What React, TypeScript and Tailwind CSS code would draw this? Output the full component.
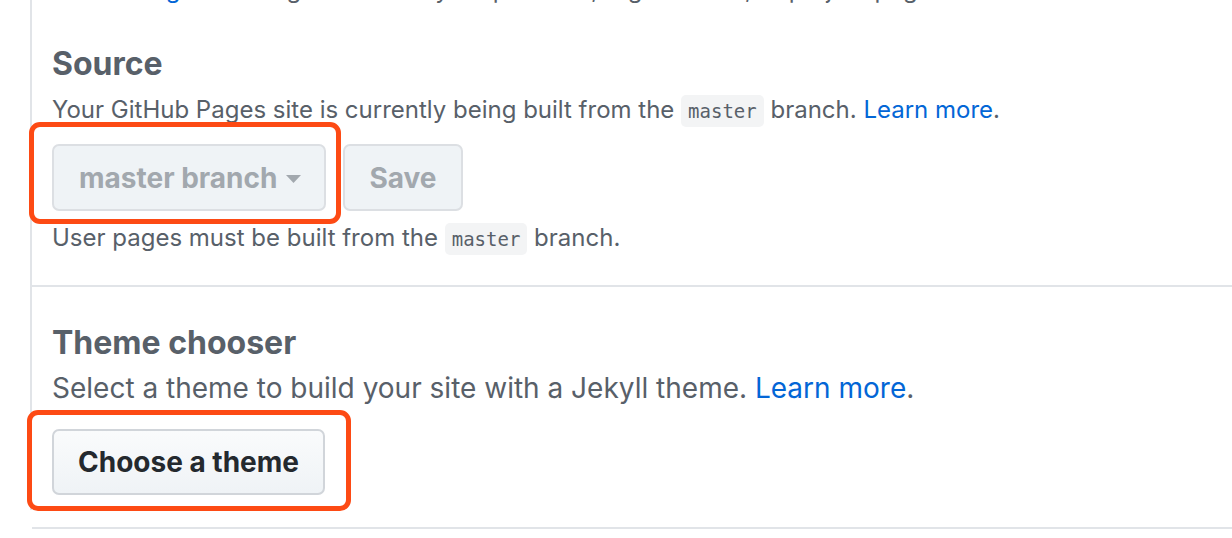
import React from 'react';

/* GitHub Pages settings — Source / Theme chooser, with red annotation boxes */

const Caret: React.FC = () => (
  <svg width="15" height="8" viewBox="0 0 15 8" className="ml-[9px] mt-[2px] shrink-0">
    <path d="M0 0 L15 0 L7.5 8 Z" fill="currentColor" />
  </svg>
);

const Code: React.FC<{ children: React.ReactNode }> = ({ children }) => (
  <code className="font-['DejaVu_Sans_Mono','Liberation_Mono',monospace] text-[19px] bg-[#f3f4f5] rounded-[5px] px-[7px] py-[5px]">
    {children}
  </code>
);

export default function App() {
  return (
    <div className="w-[1232px] h-[538px] overflow-hidden bg-white font-['Inter','Liberation_Sans',sans-serif] text-[#586069]">
      <div className="ml-[30px] h-full border-l-2 border-[#e1e4e8]">
        {/* clipped intro line */}
        <div className="pl-[20px] pb-[28px]">
          <p className="mt-[-28px] text-[24px] leading-[36px] whitespace-nowrap">
            <a className="text-[#0366d6]">GitHub Pages</a> is designed to host your personal, organization, or project pages
          </p>

          {/* ── Source ── */}
          <h2 className="mt-[36px] text-[32px] leading-[40px] font-bold text-[#586069]">Source</h2>
          <p className="mt-[8px] text-[24px] leading-[36px]">
            Your GitHub Pages site is currently being built from the <Code>master</Code> branch.{' '}
            <a className="text-[#0366d6]">Learn more</a>.
          </p>
          <div className="mt-[15px] flex gap-[17px]">
            <div className="relative">
              <button className="h-[67px] pl-[25px] pr-[23px] flex items-center rounded-[7px] border-2 border-[#dcdfe3] bg-[#eff3f6] text-[28px] font-bold text-[#a2a8ae]">
                master branch
                <Caret />
              </button>
              <span className="absolute left-[-23px] top-[-22px] right-[-15px] bottom-[-13px] rounded-[11px] border-[5px] border-[#fd4a14]" />
            </div>
            <button className="h-[67px] px-[24px] rounded-[7px] border-2 border-[#dcdfe3] bg-[#eff3f6] text-[28px] font-bold text-[#a2a8ae]">
              Save
            </button>
          </div>
          <p className="mt-[9px] text-[24px] leading-[36px]">
            User pages must be built from the <Code>master</Code> branch.
          </p>
        </div>

        <div className="h-[2px] bg-[#e1e4e8]" />

        {/* ── Theme chooser ── */}
        <div className="pl-[20px] pb-[32px]">
          <h2 className="mt-[36px] text-[32px] leading-[40px] font-bold text-[#586069]">Theme chooser</h2>
          <p className="mt-[5px] text-[28px] leading-[40px]">
            Select a theme to build your site with a Jekyll theme.{' '}
            <a className="text-[#0366d6]">Learn more</a>.
          </p>
          <div className="mt-[21px] flex">
            <div className="relative">
              <button className="h-[66px] px-[24px] rounded-[7px] border-2 border-[#d1d5da] bg-gradient-to-b from-[#fafbfc] to-[#eff3f6] text-[28px] font-bold text-[#24292e]">
                Choose a theme
              </button>
              <span className="absolute left-[-25px] top-[-19px] right-[-26px] bottom-[-16px] rounded-[11px] border-[5px] border-[#fd4a14]" />
            </div>
          </div>
        </div>

        <div className="h-[2px] bg-[#e1e4e8]" />
      </div>
    </div>
  );
}
